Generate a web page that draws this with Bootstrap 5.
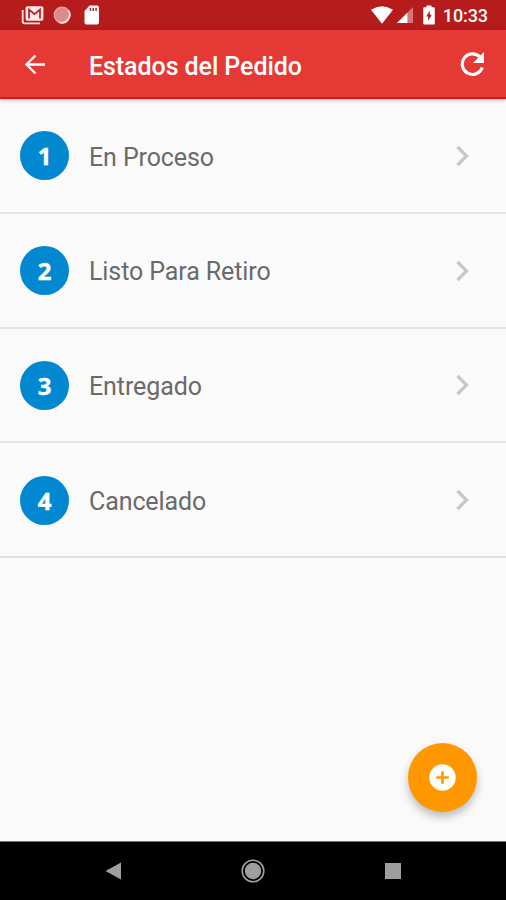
<!DOCTYPE html>
<html lang="es">
<head>
<meta charset="utf-8">
<meta name="viewport" content="width=device-width, initial-scale=1">
<title>Estados del Pedido</title>
<link href="https://cdn.jsdelivr.net/npm/bootstrap@5.3.0/dist/css/bootstrap.min.css" rel="stylesheet">
<style>
body{font-family:Roboto,"Liberation Sans",sans-serif;background:#fafafa}
.screen{height:900px}
.status-strip{height:30px;background:#b71c1c;color:#fff;padding:0 18px 0 21px}
.sd-icon{margin-left:13px}
.battery-icon{margin-left:10px}
.clock{font-size:18px;font-weight:500;line-height:30px;margin-left:8px;padding-top:1px;letter-spacing:-.1px}
.app-bar{height:69px;background:#e53935;border-bottom:2px solid #d11a18;box-shadow:0 1px 4px rgba(0,0,0,.3);padding:0 21px 0 24px;z-index:1}
.app-title{font-size:25px;font-weight:500;line-height:30px;margin-left:43px;padding-top:6px;letter-spacing:-.07px}
.state-list .list-group-item{height:114.8px;background:#fafafa;border-width:0 0 2px;border-color:#e4e4e4;padding:0 35px 0 20px;color:#6a6a6a}
.num{width:49px;height:49px;background:#0288d1;font:700 24px/49px "Open Sans",sans-serif;-webkit-text-stroke:.4px #fff;margin-top:.6px}
.state-name{font-size:25px;line-height:30px;margin-left:20px;padding-top:4.4px;letter-spacing:-.1px}
.chevron{margin-top:1px}
.fab{width:69px;height:69px;background:#ff9800;box-shadow:0 5px 9px rgba(0,0,0,.25);margin:0 29px 29px 0;border:0}
.nav-keys{height:59px;background:#000;border-top:1px solid #777;padding:0 105px 0 103px}
</style>
<script src="https://cdn.jsdelivr.net/npm/bootstrap@5.3.0/dist/js/bootstrap.bundle.min.js" defer></script>
</head>
<body>
<div class="screen d-flex flex-column overflow-hidden">
  <div class="status-strip d-flex align-items-center flex-shrink-0">
    <svg width="24" height="21" viewBox="0 0 24 21"><path d="M1.700 5v11.500q0 1.800 1.800 1.800H19" fill="none" stroke="#ffe3e3" stroke-width="1.800"/><rect x="4.600" y="1.200" width="17.800" height="14.600" rx="2" fill="#ffe9e8"/><path d="M8 13.500V4.500l5.500 4.600L19 4.500v9" fill="none" stroke="#b71c1c" stroke-width="1.700"/></svg>
    <svg class="ms-2" width="18" height="18" viewBox="0 0 18 18"><circle cx="9" cy="9" r="7.800" fill="#dc8b8b" stroke="#e9a5a5" stroke-width="1.200"/><path d="M15.200 4.200A7.900 7.900 0 0 1 6 16.200" fill="none" stroke="#ffe3e3" stroke-width="1.800"/></svg>
    <svg class="sd-icon me-auto" width="16" height="20" viewBox="0 0 16 20"><path d="M5.600.5H13a2 2 0 0 1 2 2v15a2 2 0 0 1-2 2H2.500a2 2 0 0 1-2-2V6z" fill="#fff"/><path d="M6.500 3v3M9.300 3v3M12.100 3v3" stroke="#b71c1c" stroke-width="1.500"/></svg>
    <svg width="22" height="18" viewBox="0 0 22 18"><path d="M0 3.800Q11-3.500 22 3.800L11 17.800z" fill="#fff"/></svg>
    <svg class="ms-1" width="16" height="18" viewBox="0 0 17 18"><path d="M0 17.500 17 .5v17z" fill="#d47777"/><path d="M0 17.500 11 6.500v11z" fill="#fff"/></svg>
    <svg class="battery-icon" width="12" height="20" viewBox="0 0 12 20"><path d="M3.500 2.200V.5h5v1.700h2a1.300 1.300 0 0 1 1.300 1.300v14.700a1.300 1.300 0 0 1-1.300 1.300h-9a1.300 1.300 0 0 1-1.300-1.300V3.500a1.300 1.300 0 0 1 1.300-1.300z" fill="#fff"/><path d="M6.800 5.500v4.300h2L5.200 16v-4.500h-2z" fill="#b71c1c"/></svg>
    <span class="clock text-white">10:33</span>
  </div>
  <header class="app-bar d-flex align-items-center flex-shrink-0 position-relative text-white">
    <svg width="22" height="22" viewBox="0 0 22 22" fill="none" stroke="#fff" stroke-width="2.400"><path d="M21 11.500H3M11.500 2.500l-9 9 9 9"/></svg>
    <h1 class="app-title mb-0">Estados del Pedido</h1>
    <svg class="ms-auto" width="26" height="26" viewBox="0 0 26 26"><path d="M21 6A10.300 10.300 0 1 0 23.300 16.500" fill="none" stroke="#fff" stroke-width="3.100"/><path d="M25 1v11H14z" fill="#fff"/></svg>
  </header>
  <ul class="state-list list-group list-group-flush flex-shrink-0">
    <li class="list-group-item d-flex align-items-center"><span class="num rounded-circle text-white text-center">1</span><span class="state-name">En Proceso</span><svg class="chevron ms-auto" width="16" height="22" viewBox="0 0 16 22"><path d="m2.500 2 9 9-9 9" fill="none" stroke="#c7c7c7" stroke-width="3.200"/></svg></li>
    <li class="list-group-item d-flex align-items-center"><span class="num rounded-circle text-white text-center">2</span><span class="state-name">Listo Para Retiro</span><svg class="chevron ms-auto" width="16" height="22" viewBox="0 0 16 22"><path d="m2.500 2 9 9-9 9" fill="none" stroke="#c7c7c7" stroke-width="3.200"/></svg></li>
    <li class="list-group-item d-flex align-items-center"><span class="num rounded-circle text-white text-center">3</span><span class="state-name">Entregado</span><svg class="chevron ms-auto" width="16" height="22" viewBox="0 0 16 22"><path d="m2.500 2 9 9-9 9" fill="none" stroke="#c7c7c7" stroke-width="3.200"/></svg></li>
    <li class="list-group-item d-flex align-items-center border-bottom border-2"><span class="num rounded-circle text-white text-center">4</span><span class="state-name">Cancelado</span><svg class="chevron ms-auto" width="16" height="22" viewBox="0 0 16 22"><path d="m2.500 2 9 9-9 9" fill="none" stroke="#c7c7c7" stroke-width="3.200"/></svg></li>
  </ul>
  <div class="flex-grow-1 d-flex justify-content-end align-items-end">
    <button class="fab rounded-circle p-0 d-flex align-items-center justify-content-center" type="button" aria-label="Agregar"><svg width="27" height="27" viewBox="0 0 27 27"><circle cx="13.500" cy="13.500" r="13.200" fill="#fff"/><path d="M13.500 7.200v12.600M7.200 13.500h12.600" stroke="#ff9800" stroke-width="2.600"/></svg></button>
  </div>
  <nav class="nav-keys d-flex align-items-center justify-content-between flex-shrink-0">
    <svg width="18" height="18" viewBox="0 0 18 18"><path d="M2.500 9 18 .5v17z" fill="#9e9e9e"/></svg>
    <svg width="24" height="24" viewBox="0 0 24 24"><circle cx="12" cy="12" r="10.800" fill="none" stroke="#9e9e9e" stroke-width="1.600"/><circle cx="12" cy="12" r="8.200" fill="#9e9e9e"/></svg>
    <svg width="16" height="16" viewBox="0 0 16 16"><path d="M0 0h16v16H0z" fill="#9e9e9e"/></svg>
  </nav>
</div>
</body>
</html>
